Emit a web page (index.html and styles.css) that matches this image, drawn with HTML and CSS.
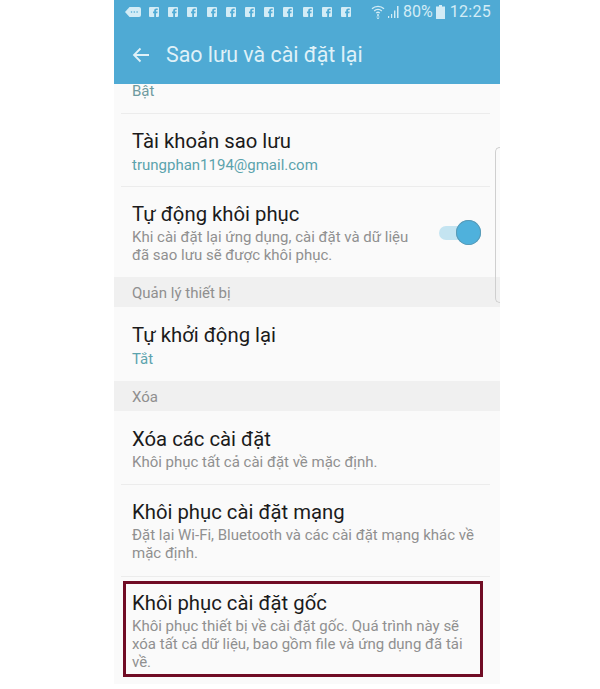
FILE: index.html
```html
<!DOCTYPE html>
<html lang="vi">
<head>
<meta charset="utf-8">
<title>Sao lưu và cài đặt lại</title>
<link rel="stylesheet" href="styles.css">
</head>
<body>
<svg class="defs" width="0" height="0" aria-hidden="true">
  <symbol id="fb" viewBox="0 0 10 10">
    <path fill="#d3ecf6" fill-rule="evenodd" d="M1 0h8a1 1 0 0 1 1 1v8a1 1 0 0 1-1 1H7V6.200h1.400L8.600 4.600H7V3.700C7 3.200 7.200 3 7.700 3h1V1.600H7.400C5.900 1.600 5.200 2.400 5.200 3.600v1H4v1.600h1.200V10H1a1 1 0 0 1-1-1V1a1 1 0 0 1 1-1z"/>
  </symbol>
</svg>
<main class="phone">
  <header class="appbar">
    <div class="status">
      <svg class="msg" viewBox="0 0 16 10" width="16" height="10"><path fill="#d3ecf6" d="M4.500 0H14a2 2 0 0 1 2 2v6a2 2 0 0 1-2 2H4.500L0 5z"/><circle cx="6.500" cy="5" r=".8" fill="#4faad4"/><circle cx="9.300" cy="5" r=".8" fill="#4faad4"/><circle cx="12.100" cy="5" r=".8" fill="#4faad4"/></svg>
      <div class="fbs">
        <svg class="fb"><use href="#fb"/></svg><svg class="fb"><use href="#fb"/></svg><svg class="fb"><use href="#fb"/></svg><svg class="fb"><use href="#fb"/></svg><svg class="fb"><use href="#fb"/></svg><svg class="fb"><use href="#fb"/></svg><svg class="fb"><use href="#fb"/></svg><svg class="fb"><use href="#fb"/></svg><svg class="fb"><use href="#fb"/></svg><svg class="fb"><use href="#fb"/></svg><svg class="fb"><use href="#fb"/></svg>
      </div>
      <div class="sys">
        <svg class="wifi" viewBox="0 0 14 15" width="14" height="15"><g fill="none" stroke="#d3ecf6" stroke-width="1.300"><path d="M1 4.800a8.500 8.500 0 0 1 12 0"/><path d="M3.200 7a5.400 5.400 0 0 1 7.600 0"/><path d="M5.200 9.100a2.600 2.600 0 0 1 3.600 0"/></g><circle cx="7" cy="11" r="1" fill="#d3ecf6"/><path d="M5.500 13h3M6 14.500h2" stroke="#d3ecf6" stroke-width=".8"/></svg>
        <svg class="signal" viewBox="0 0 12 12" width="12" height="12"><path fill="#d3ecf6" d="M0 10h1.200v2H0zM3 8h1.200v4H3zM6 4.500h1.400V12H6zM9 0h1.500v12H9z"/></svg>
        <span class="pct">80%</span>
        <svg class="batt" viewBox="0 0 9 14" width="9" height="14"><path fill="#d3ecf6" d="M3 0h3v1.500h3V14H0V1.500h3z"/></svg>
        <span class="clock">12:25</span>
      </div>
    </div>
    <div class="toolbar">
      <svg class="back" viewBox="0 0 18 16" width="18" height="16"><path fill="none" stroke="#dff1f8" stroke-width="1.800" d="M17 8H2M8.500 1.500 2 8l6.500 6.500"/></svg>
      <h1>Sao lưu và cài đặt lại</h1>
    </div>
  </header>

  <div class="cut"><span class="sub">Bật</span></div>

  <section class="row line">
    <div class="title">Tài khoản sao lưu</div>
    <div class="val">trungphan1194@gmail.com</div>
  </section>

  <section class="row line toggle-row">
    <div class="body">
      <div class="title">Tự động khôi phục</div>
      <div class="sub">Khi cài đặt lại ứng dụng, cài đặt và dữ liệu<br>đã sao lưu sẽ được khôi phục.</div>
    </div>
    <div class="switch"><span class="knob"></span></div>
  </section>

  <div class="head">Quản lý thiết bị</div>

  <section class="row plain">
    <div class="title">Tự khởi động lại</div>
    <div class="val">Tắt</div>
  </section>

  <div class="head">Xóa</div>

  <section class="row plain short">
    <div class="title">Xóa các cài đặt</div>
    <div class="sub">Khôi phục tất cả cài đặt về mặc định.</div>
  </section>

  <section class="row line tall">
    <div class="title">Khôi phục cài đặt mạng</div>
    <div class="sub">Đặt lại Wi-Fi, Bluetooth và các cài đặt mạng khác về<br>mặc định.</div>
  </section>

  <section class="row line last">
    <div class="title">Khôi phục cài đặt gốc</div>
    <div class="sub">Khôi phục thiết bị về cài đặt gốc. Quá trình này sẽ<br>xóa tất cả dữ liệu, bao gồm file và ứng dụng đã tải<br>về.</div>
    <span class="mark"></span>
  </section>

  <span class="edge"></span>
</main>
</body>
</html>
```
FILE: styles.css
```css
* { box-sizing: border-box; }
html, body { margin: 0; padding: 0; height: 689px; overflow: hidden; background: #fff; }
body { font-family: Roboto, "Noto Sans", sans-serif; }
.defs { position: absolute; }

.phone {
  position: relative;
  width: 386px;
  margin-left: 114px;
  height: 684px;
  background: #fafafa;
  overflow: hidden;
}

.appbar { height: 84px; background: #4faad4; display: flex; flex-direction: column; }
.status { height: 25px; display: flex; align-items: center; padding: 0 9px 2px 11px; color: #d3ecf6; }
.msg { display: block; }
.fbs { display: flex; gap: 9.200px; margin-left: 8px; }
.fb { width: 10px; height: 10px; display: block; }
.sys { display: flex; align-items: center; margin-left: auto; }
.wifi { margin-right: 3px; }
.signal { margin-right: 3px; }
.pct { font-size: 16px; margin-right: 3px; }
.batt { margin-right: 5px; }
.clock { font-size: 16px; letter-spacing: .3px; }

.toolbar { flex: 1; display: flex; align-items: center; padding: 0 0 0 18px; }
.back { margin-right: 16px; }
h1 { margin: 0; font-size: 21.400px; font-weight: 400; color: #dff1f8; }

.cut { height: 29px; padding: 0 18px; }
.cut .sub { display: block; margin-top: 0; line-height: 15px; color: #6f9a9f; }

.title { font-size: 20.300px; line-height: 24px; color: #1b1b1b; }
.sub { font-size: 15px; line-height: 18px; color: #909090; margin-top: 2px; }
.val { font-size: 15px; line-height: 18px; color: #5ba3ad; margin-top: 3px; }

.row { position: relative; padding: 16px 18px 0; }
.line::before {
  content: "";
  position: absolute;
  top: 0; left: 7px; right: 10px;
  height: 1px;
  background: #ececec;
}
.row.line { height: 73px; }
.row.toggle-row { height: 91px; padding-top: 16px; display: flex; align-items: flex-start; justify-content: space-between; }
.row.plain { height: 74px; }
.row.plain.short { height: 73px; }
.row.line.tall { height: 92px; }
.row.line.last { height: 108px; padding-top: 15px; }
.head { height: 30px; background: #f0f0f0; padding: 7px 18px 0; font-size: 15px; line-height: 18px; color: #8f8f8f; }

.switch {
  position: relative;
  width: 37px; height: 14px;
  margin: 24px 6px 0 0;
  border-radius: 7px;
  background: #c4e4f1;
}
.knob {
  position: absolute;
  right: -5px; top: -6px;
  width: 25px; height: 25px;
  border-radius: 50%;
  background: #4fb1dc;
  box-shadow: inset 0 0 0 1px #5b9ab5;
}

.mark {
  position: absolute;
  left: 9px; top: 5px;
  width: 360px; height: 96px;
  border: 3px solid #700c24;
}

.edge {
  position: absolute;
  right: 0; top: 147px;
  width: 5px; height: 156px;
  border: 1px solid #cfcfcf;
  border-right: 0;
  border-radius: 5px 0 0 5px;
}
```
